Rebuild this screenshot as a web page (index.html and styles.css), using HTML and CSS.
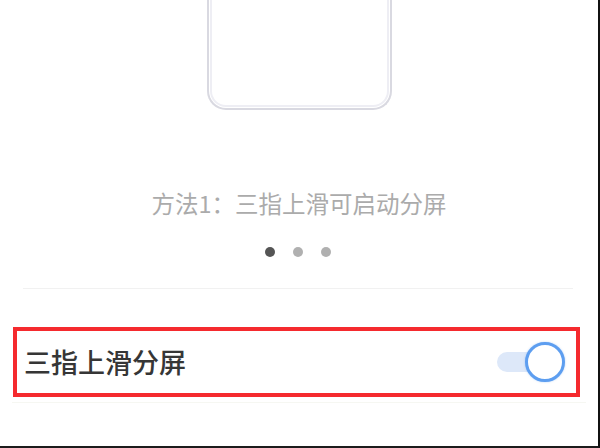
FILE: index.html
```html
<!DOCTYPE html>
<html lang="zh-CN">
<head>
<meta charset="utf-8">
<title>三指上滑分屏</title>
<link rel="stylesheet" href="styles.css">
</head>
<body>
<div class="screen">
  <div class="phone"><div class="phone-inner"></div></div>
  <p class="method">方法1：三指上滑可启动分屏</p>
  <div class="dots">
    <span class="dot active"></span>
    <span class="dot"></span>
    <span class="dot"></span>
  </div>
  <div class="divider"></div>
  <div class="setting">
    <span class="label">三指上滑分屏</span>
    <div class="toggle">
      <span class="track"></span>
      <span class="knob"></span>
    </div>
  </div>
  <div class="faint"></div>
</div>
</body>
</html>
```
FILE: styles.css
```css
html, body {
  margin: 0;
  padding: 0;
  background: #ffffff;
}
.screen {
  width: 600px;
  height: 448px;
  box-sizing: border-box;
  border-right: 2px solid #111111;
  border-bottom: 2px solid #1c1c1c;
  overflow: hidden;
  display: flex;
  flex-direction: column;
  align-items: center;
  font-family: "Noto Sans CJK SC", "Noto Sans", sans-serif;
}
.phone {
  width: 185px;
  height: 110px;
  box-sizing: border-box;
  flex-shrink: 0;
  border: 2px solid #d9d9e1;
  border-top: none;
  border-radius: 0 0 19px 19px;
  padding: 0 1px 1px;
  display: flex;
}
.phone-inner {
  flex: 1;
  border: 2px solid #eeeef4;
  border-top: none;
  border-radius: 0 0 16px 16px;
}
.method {
  margin: 78px 0 0;
  font-size: 23.5px;
  line-height: 30px;
  color: #ababab;
  white-space: nowrap;
}
.dots {
  margin-top: 29px;
  margin-left: -2px;
  display: flex;
  gap: 18px;
}
.dot {
  width: 10px;
  height: 10px;
  border-radius: 50%;
  background: #b0b0b0;
}
.dot.active {
  background: #555555;
}
.divider {
  align-self: flex-start;
  margin: 31px 0 0 23px;
  width: 550px;
  height: 1px;
  background: #f1f1f1;
}
.setting {
  align-self: flex-start;
  margin: 38px 0 0 13px;
  width: 567px;
  height: 70px;
  box-sizing: border-box;
  border: 4px solid #f52a2e;
  padding: 0 11px 0 7px;
  display: flex;
  align-items: center;
  justify-content: space-between;
}
.label {
  font-size: 27px;
  font-weight: 500;
  color: #363636;
  line-height: 34px;
}
.toggle {
  position: relative;
  width: 68px;
  height: 40px;
}
.track {
  position: absolute;
  left: 0;
  top: 10px;
  width: 56px;
  height: 20px;
  border-radius: 10px;
  background: #dde8f9;
}
.knob {
  position: absolute;
  right: 0;
  top: 0;
  width: 40px;
  height: 40px;
  box-sizing: border-box;
  border-radius: 50%;
  border: 3.5px solid #5d9ef0;
  background: #ffffff;
  box-shadow: 0 0 2px rgba(93, 158, 240, 0.5);
}
.faint {
  align-self: flex-start;
  margin: 5px 0 0 12px;
  width: 574px;
  height: 1px;
  background: #f6f7f2;
}
```
